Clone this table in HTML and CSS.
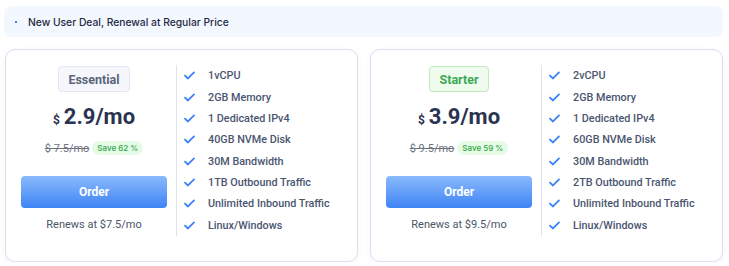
FILE: index.html
```html
<!DOCTYPE html>
<html>
<head>
<meta charset="utf-8">
<link rel="stylesheet" href="styles.css">
</head>
<body>
<div class="page">
  <div class="banner"><span class="dot"></span><span class="banner-text">New User Deal, Renewal at Regular Price</span></div>
  <div class="cards">
    <div class="card">
      <div class="left">
        <div class="badge badge-gray">Essential</div>
        <div class="price"><span class="cur">$</span><span class="amount">2.9/mo</span></div>
        <div class="old"><span class="strike">$ 7.5/mo</span><span class="save">Save 62 %</span></div>
        <button class="order">Order</button>
        <div class="renew">Renews at $7.5/mo</div>
      </div>
      <ul class="features">
        <li><svg class="chk" viewBox="0 0 12 10"><path d="M1 5.2 L4.3 8.3 L11 1.5"/></svg>1vCPU</li>
        <li><svg class="chk" viewBox="0 0 12 10"><path d="M1 5.2 L4.3 8.3 L11 1.5"/></svg>2GB Memory</li>
        <li><svg class="chk" viewBox="0 0 12 10"><path d="M1 5.2 L4.3 8.3 L11 1.5"/></svg>1 Dedicated IPv4</li>
        <li><svg class="chk" viewBox="0 0 12 10"><path d="M1 5.2 L4.3 8.3 L11 1.5"/></svg>40GB NVMe Disk</li>
        <li><svg class="chk" viewBox="0 0 12 10"><path d="M1 5.2 L4.3 8.3 L11 1.5"/></svg>30M Bandwidth</li>
        <li><svg class="chk" viewBox="0 0 12 10"><path d="M1 5.2 L4.3 8.3 L11 1.5"/></svg>1TB Outbound Traffic</li>
        <li><svg class="chk" viewBox="0 0 12 10"><path d="M1 5.2 L4.3 8.3 L11 1.5"/></svg>Unlimited Inbound Traffic</li>
        <li><svg class="chk" viewBox="0 0 12 10"><path d="M1 5.2 L4.3 8.3 L11 1.5"/></svg>Linux/Windows</li>
      </ul>
    </div>
    <div class="card">
      <div class="left">
        <div class="badge badge-green">Starter</div>
        <div class="price"><span class="cur">$</span><span class="amount">3.9/mo</span></div>
        <div class="old"><span class="strike">$ 9.5/mo</span><span class="save">Save 59 %</span></div>
        <button class="order">Order</button>
        <div class="renew">Renews at $9.5/mo</div>
      </div>
      <ul class="features">
        <li><svg class="chk" viewBox="0 0 12 10"><path d="M1 5.2 L4.3 8.3 L11 1.5"/></svg>2vCPU</li>
        <li><svg class="chk" viewBox="0 0 12 10"><path d="M1 5.2 L4.3 8.3 L11 1.5"/></svg>2GB Memory</li>
        <li><svg class="chk" viewBox="0 0 12 10"><path d="M1 5.2 L4.3 8.3 L11 1.5"/></svg>1 Dedicated IPv4</li>
        <li><svg class="chk" viewBox="0 0 12 10"><path d="M1 5.2 L4.3 8.3 L11 1.5"/></svg>60GB NVMe Disk</li>
        <li><svg class="chk" viewBox="0 0 12 10"><path d="M1 5.2 L4.3 8.3 L11 1.5"/></svg>30M Bandwidth</li>
        <li><svg class="chk" viewBox="0 0 12 10"><path d="M1 5.2 L4.3 8.3 L11 1.5"/></svg>2TB Outbound Traffic</li>
        <li><svg class="chk" viewBox="0 0 12 10"><path d="M1 5.2 L4.3 8.3 L11 1.5"/></svg>Unlimited Inbound Traffic</li>
        <li><svg class="chk" viewBox="0 0 12 10"><path d="M1 5.2 L4.3 8.3 L11 1.5"/></svg>Linux/Windows</li>
      </ul>
    </div>
  </div>
</div>
</body>
</html>
```
FILE: styles.css
```css
* { box-sizing: border-box; }
html, body { margin: 0; padding: 0; background: #ffffff; }
body { font-family: Roboto, "Liberation Sans", sans-serif; }
.page { padding: 6px 6px 0 4px; width: 729px; }
.banner {
  height: 31px;
  background: #f3f7fe;
  border-radius: 7px;
  display: flex;
  align-items: center;
  padding-left: 11px;
}
.dot { width: 2px; height: 2px; background: #3b82f6; margin-right: 11px; }
.banner-text { font-family: Inter, sans-serif; font-size: 10.3px; font-weight: 500; color: #1f2a44; }
.cards {
  margin-top: 12px;
  margin-left: 1px;
  display: grid;
  grid-template-columns: 353px 353px;
  column-gap: 12px;
}
.card {
  height: 213px;
  border: 1px solid #dedcf3;
  border-radius: 10px;
  background: #fff;
  box-shadow: 0 2px 6px rgba(60, 60, 100, 0.06);
  display: flex;
  padding-top: 15px;
}
.left {
  width: 170px;
  padding-left: 6px;
  display: flex;
  flex-direction: column;
  align-items: center;
}
.badge {
  margin-top: 1px;
  height: 26px;
  padding: 0 9px;
  border-radius: 4px;
  font-size: 12.5px;
  font-weight: 700;
  display: flex;
  align-items: center;
}
.badge-gray { background: #f6f7fd; border: 1px solid #e3e5f4; color: #5b6478; }
.badge-green { background: #effbec; border: 1px solid #bfe9bb; color: #3aa856; }
.price { margin-top: 11px; display: flex; align-items: baseline; color: #2a3350; }
.cur { font-size: 12px; font-weight: 700; margin-right: 4px; }
.amount { font-size: 22px; font-weight: 700; line-height: 27px; }
.old { margin-top: 11px; display: flex; align-items: center; }
.strike { font-size: 11px; color: #6b7280; text-decoration: line-through; margin-right: 3px; }
.save {
  font-size: 8px;
  color: #2fa84a;
  background: #e5fbe5;
  border-radius: 7px;
  padding: 2px 5px;
  line-height: 10px;
  font-family: Inter, sans-serif;
  font-weight: 500;
}
.order {
  margin-top: 21px;
  width: 146px;
  height: 32px;
  border: none;
  border-radius: 4px;
  background: linear-gradient(#8bbafc, #3d84f5);
  color: #fff;
  font-family: Roboto, sans-serif;
  font-weight: 700;
  font-size: 12px;
}
.renew { margin-top: 10px; font-size: 11px; color: #4b5567; }
.features {
  list-style: none;
  margin: 0;
  padding: 0 0 0 7px;
  border-left: 1px solid #dfe2ee;
  height: 171px;
  display: flex;
  flex-direction: column;
}
.features li {
  height: 21.375px;
  display: flex;
  align-items: center;
  font-size: 10.8px;
  font-weight: 500;
  color: #4a5570;
}
.chk { width: 11px; height: 9px; margin-right: 13px; fill: none; stroke: #3b82f6; stroke-width: 2; stroke-linecap: round; stroke-linejoin: round; }
```
